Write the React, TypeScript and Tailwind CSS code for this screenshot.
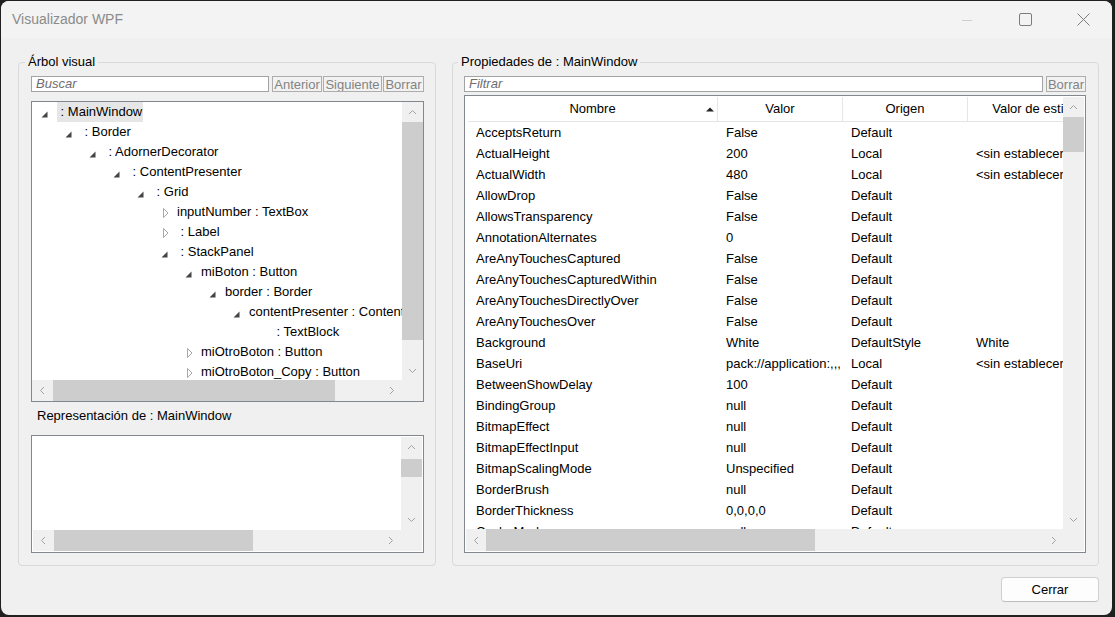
import React from 'react';

type Node = { level: number; state: 'open' | 'closed' | 'leaf'; text: string; selected?: boolean };

const tree: Node[] = [
  { level: 0, state: 'open', text: ' : MainWindow', selected: true },
  { level: 1, state: 'open', text: ' : Border' },
  { level: 2, state: 'open', text: ' : AdornerDecorator' },
  { level: 3, state: 'open', text: ' : ContentPresenter' },
  { level: 4, state: 'open', text: ' : Grid' },
  { level: 5, state: 'closed', text: 'inputNumber : TextBox' },
  { level: 5, state: 'closed', text: ' : Label' },
  { level: 5, state: 'open', text: ' : StackPanel' },
  { level: 6, state: 'open', text: 'miBoton : Button' },
  { level: 7, state: 'open', text: 'border : Border' },
  { level: 8, state: 'open', text: 'contentPresenter : ContentPresenter' },
  { level: 9, state: 'leaf', text: ' : TextBlock' },
  { level: 6, state: 'closed', text: 'miOtroBoton : Button' },
  { level: 6, state: 'closed', text: 'miOtroBoton_Copy : Button' },
];

const props: [string, string, string, string][] = [
  ['AcceptsReturn', 'False', 'Default', ''],
  ['ActualHeight', '200', 'Local', '<sin establecer>'],
  ['ActualWidth', '480', 'Local', '<sin establecer>'],
  ['AllowDrop', 'False', 'Default', ''],
  ['AllowsTransparency', 'False', 'Default', ''],
  ['AnnotationAlternates', '0', 'Default', ''],
  ['AreAnyTouchesCaptured', 'False', 'Default', ''],
  ['AreAnyTouchesCapturedWithin', 'False', 'Default', ''],
  ['AreAnyTouchesDirectlyOver', 'False', 'Default', ''],
  ['AreAnyTouchesOver', 'False', 'Default', ''],
  ['Background', 'White', 'DefaultStyle', 'White'],
  ['BaseUri', 'pack://application:,,,/WpfApp1;component/mainwindow.xaml', 'Local', '<sin establecer>'],
  ['BetweenShowDelay', '100', 'Default', ''],
  ['BindingGroup', 'null', 'Default', ''],
  ['BitmapEffect', 'null', 'Default', ''],
  ['BitmapEffectInput', 'null', 'Default', ''],
  ['BitmapScalingMode', 'Unspecified', 'Default', ''],
  ['BorderBrush', 'null', 'Default', ''],
  ['BorderThickness', '0,0,0,0', 'Default', ''],
  ['CacheMode', 'null', 'Default', ''],
];

function Chevron({ dir }: { dir: 'up' | 'down' | 'left' | 'right' }) {
  const pts = {
    up: '1,6 4.5,2.5 8,6',
    down: '1,3 4.5,6.5 8,3',
    left: '6,1 2.5,4.5 6,8',
    right: '3,1 6.5,4.5 3,8',
  }[dir];
  return (
    <svg width="9" height="9" viewBox="0 0 9 9">
      <polyline points={pts} fill="none" stroke="#a2a2a2" strokeWidth="1" />
    </svg>
  );
}

function VScroll({ btn, thumb }: { btn: string; thumb: string }) {
  return (
    <div className="flex flex-col bg-[#f0f0f0]">
      <div className={`${btn} flex items-center justify-center`}>
        <Chevron dir="up" />
      </div>
      <div className="flex-1">
        <div className={`${thumb} bg-[#cdcdcd]`} />
      </div>
      <div className={`${btn} flex items-center justify-center`}>
        <Chevron dir="down" />
      </div>
    </div>
  );
}

function HScroll({ btn, thumb }: { btn: string; thumb: string }) {
  return (
    <div className="flex bg-[#f0f0f0]">
      <div className={`${btn} flex items-center justify-center`}>
        <Chevron dir="left" />
      </div>
      <div className="flex-1 flex">
        <div className={`${thumb} h-full bg-[#cdcdcd]`} />
      </div>
      <div className={`${btn} flex items-center justify-center`}>
        <Chevron dir="right" />
      </div>
    </div>
  );
}

function Expander({ state }: { state: Node['state'] }) {
  if (state === 'leaf') return <span className="w-[16px] shrink-0" />;
  return (
    <svg width="16" height="20" className="shrink-0">
      {state === 'open' ? (
        <polygon points="6.5,9.5 6.5,15.5 0.5,15.5" fill="#454545" />
      ) : (
        <polygon points="2.5,6.5 7,11 2.5,15.5" fill="#fff" stroke="#a8a8a8" />
      )}
    </svg>
  );
}

function SmallButton({ w, label }: { w: string; label: string }) {
  return (
    <div className={`${w} h-[16px] border border-[#adadad] bg-[#f2f2f2] text-[#838383] leading-[14px] pt-[1px] text-center overflow-hidden`}>
      {label}
    </div>
  );
}

function Cell({ w, text }: { w: string; text: string }) {
  return (
    <div className={`${w} shrink-0 pl-[8px] pr-[3px]`}>
      <div className="overflow-hidden">{text}</div>
    </div>
  );
}

export default function App() {
  return (
    <div className="w-[1115px] h-[617px] bg-[#202020] pt-[1px] pl-[1px] font-['Liberation_Sans',Arial,sans-serif] text-[13px] text-black">
      <div className="w-[1111px] h-[614px] rounded-[8px] bg-[#f0f0f0] overflow-hidden flex flex-col">
        {/* title bar */}
        <div className="h-[37px] flex items-center bg-[#f3f3f3]">
          <span className="pl-[11px] text-[14px] text-[#8b8b8b]">Visualizador WPF</span>
          <div className="ml-auto flex self-stretch">
            <div className="w-[58px] flex items-center justify-center">
              <svg width="12" height="12"><line x1="1" y1="6.5" x2="11" y2="6.5" stroke="#cfcfcf" /></svg>
            </div>
            <div className="w-[58px] flex items-center justify-center">
              <svg width="13" height="13"><rect x="0.5" y="0.5" width="12" height="12" rx="1.5" fill="none" stroke="#7c7c7c" /></svg>
            </div>
            <div className="w-[58px] flex items-center justify-center">
              <svg width="13" height="13"><path d="M0.5 0.5 L12.5 12.5 M12.5 0.5 L0.5 12.5" stroke="#7c7c7c" /></svg>
            </div>
          </div>
        </div>

        <div className="flex gap-[16px] pl-[17px] pr-[13px] mt-[16px]">
          {/* Árbol visual */}
          <fieldset className="w-[418px] h-[512px] border border-[#d9d9d9] rounded-[4px] pl-[12px] pr-[11px]">
            <legend className="-ml-[6px] px-[3px] leading-[16px]">Árbol visual</legend>
            <div className="flex mt-[6px] h-[16px]">
              <div className="flex-1 border border-[#a3a3a3] bg-white pl-[4px] leading-[14px] italic text-[#6d6d6d]">Buscar</div>
              <div className="flex gap-[1px] ml-[3px]">
                <SmallButton w="w-[50px]" label="Anterior" />
                <SmallButton w="w-[59px]" label="Siguiente" />
                <SmallButton w="w-[41px]" label="Borrar" />
              </div>
            </div>

            <div className="mt-[9px] h-[301px] border border-[#828790] bg-white grid grid-cols-[1fr_21px] grid-rows-[1fr_21px]">
              <div className="overflow-hidden">
                {tree.map((n, i) => (
                  <div key={i} className="h-[20px] flex items-center whitespace-pre" style={{ paddingLeft: 9 + 24 * n.level }}>
                    <Expander state={n.state} />
                    <span className={`leading-[20px] pr-[1px] ${n.selected ? 'bg-[#e6e6e6]' : ''}`}>{n.text}</span>
                  </div>
                ))}
              </div>
              <VScroll btn="h-[20px]" thumb="h-[218px]" />
              <HScroll btn="w-[21px]" thumb="w-[282px]" />
              <div className="bg-[#f0f0f0]" />
            </div>

            <div className="mt-[6px] h-[16px] leading-[16px] pl-[6px]">Representación de : MainWindow</div>

            <div className="mt-[11px] h-[118px] border border-[#828790] p-[1px] bg-white grid grid-cols-[1fr_21px] grid-rows-[1fr_21px]">
              <div />
              <div className="flex flex-col bg-[#f0f0f0]">
                <div className="h-[21px] flex items-center justify-center">
                  <Chevron dir="up" />
                </div>
                <div className="flex-1">
                  <div className="mt-[1px] h-[18px] bg-[#cdcdcd]" />
                </div>
                <div className="h-[21px] flex items-center justify-center">
                  <Chevron dir="down" />
                </div>
              </div>
              <HScroll btn="w-[21px]" thumb="w-[199px]" />
              <div className="bg-[#f0f0f0]" />
            </div>
          </fieldset>

          {/* Propiedades */}
          <fieldset className="w-[647px] h-[512px] border border-[#d9d9d9] rounded-[4px] pl-[11px] pr-[12px]">
            <legend className="-ml-[6px] px-[3px] leading-[16px]">Propiedades de : MainWindow</legend>
            <div className="flex mt-[6px] h-[16px]">
              <div className="flex-1 border border-[#a3a3a3] bg-white pl-[4px] leading-[14px] italic text-[#6d6d6d]">Filtrar</div>
              <div className="ml-[3px]">
                <SmallButton w="w-[40px]" label="Borrar" />
              </div>
            </div>

            <div className="mt-[3px] h-[458px] border border-[#828790] p-[1px] bg-white grid grid-cols-[1fr_21px] grid-rows-[1fr_22px]">
              <div className="overflow-hidden pl-[2px]">
                <div className="h-[25px] flex border-b border-[#e5e5e5] leading-[24px] whitespace-nowrap">
                  <div className="relative w-[250px] shrink-0 border-r border-[#e5e5e5] text-center">
                    Nombre
                    <svg width="8" height="5" className="absolute right-[3px] top-[10px]">
                      <polygon points="0,4.5 4,0.5 8,4.5" fill="#222" />
                    </svg>
                  </div>
                  <div className="w-[125px] shrink-0 border-r border-[#e5e5e5] text-center">Valor</div>
                  <div className="w-[125px] shrink-0 border-r border-[#e5e5e5] text-center">Origen</div>
                  <div className="w-[130px] shrink-0 text-center">Valor de estilo</div>
                </div>
                {props.map(([a, b, c, d]) => (
                  <div key={a} className="h-[21px] flex leading-[21px] whitespace-nowrap">
                    <Cell w="w-[250px]" text={a} />
                    <Cell w="w-[125px]" text={b} />
                    <Cell w="w-[125px]" text={c} />
                    <Cell w="w-[130px]" text={d} />
                  </div>
                ))}
              </div>
              <VScroll btn="h-[20px]" thumb="h-[35px]" />
              <HScroll btn="w-[20px]" thumb="w-[329px]" />
              <div className="bg-[#f0f0f0]" />
            </div>
          </fieldset>
        </div>

        <div className="flex justify-end pr-[13px] mt-[11px]">
          <button className="w-[98px] h-[25px] rounded-[4px] border border-[#d0d0d0] border-b-[#bdbdbd] bg-[#fdfdfd] text-[13px] leading-[23px] text-black">
            Cerrar
          </button>
        </div>
      </div>
    </div>
  );
}
